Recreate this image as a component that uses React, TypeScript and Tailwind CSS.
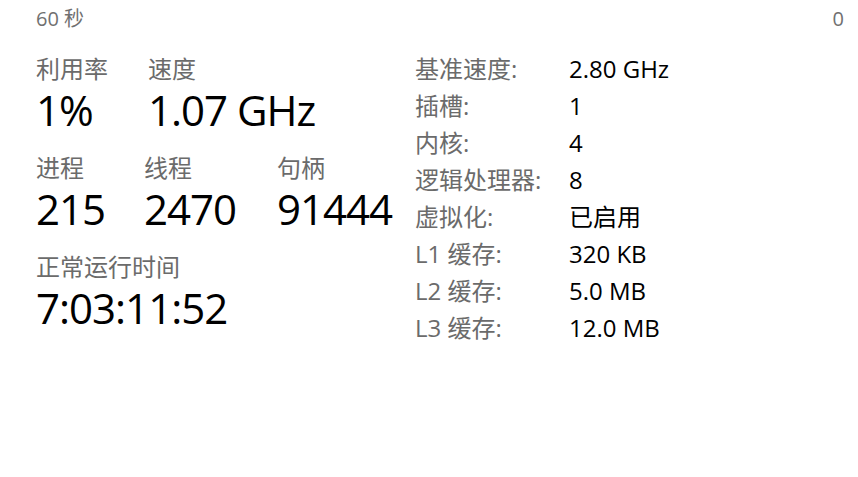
import React from 'react';

const stats = [
  [
    { label: '利用率', value: '1%', width: 'w-[112px]' },
    { label: '速度', value: '1.07 GHz', width: 'w-[200px]' },
  ],
  [
    { label: '进程', value: '215', width: 'w-[108px]' },
    { label: '线程', value: '2470', width: 'w-[133px]' },
    { label: '句柄', value: '91444', width: 'w-[130px]' },
  ],
  [{ label: '正常运行时间', value: '7:03:11:52', width: 'w-[300px]' }],
];

const specs = [
  { label: '基准速度:', value: '2.80 GHz' },
  { label: '插槽:', value: '1' },
  { label: '内核:', value: '4' },
  { label: '逻辑处理器:', value: '8' },
  { label: '虚拟化:', value: '已启用' },
  { label: 'L1 缓存:', value: '320 KB' },
  { label: 'L2 缓存:', value: '5.0 MB' },
  { label: 'L3 缓存:', value: '12.0 MB' },
];

const App = () => {
  return (
    <div className="w-[858px] h-[477px] overflow-hidden bg-white font-['Open_Sans','Noto_Sans_CJK_SC',sans-serif]">
      <div className="flex items-center justify-between h-[38px] pl-[36px] pr-[14px] text-[20px] leading-[38px] text-[#707070]">
        <span>60 秒</span>
        <span>0</span>
      </div>
      <div className="flex pl-[36px]">
        <div className="w-[379px] flex flex-col gap-[17px] pt-[18px]">
          {stats.map((row, i) => (
            <div key={i} className="flex">
              {row.map((s) => (
                <div key={s.label} className={`${s.width} shrink-0`}>
                  <div className="text-[24px] leading-[26px] text-[#6b6b6b]">{s.label}</div>
                  <div className="text-[42px] leading-[56px] tracking-[-1px] text-black whitespace-nowrap">{s.value}</div>
                </div>
              ))}
            </div>
          ))}
        </div>
        <div className="pt-[12px]">
          {specs.map((s) => (
            <div key={s.label} className="flex h-[37px] items-center leading-[37px]">
              <div className="w-[154px] text-[24px] text-[#6b6b6b] whitespace-nowrap">{s.label}</div>
              <div className="text-[24px] text-black whitespace-nowrap">{s.value}</div>
            </div>
          ))}
        </div>
      </div>
    </div>
  );
};

export default App;
